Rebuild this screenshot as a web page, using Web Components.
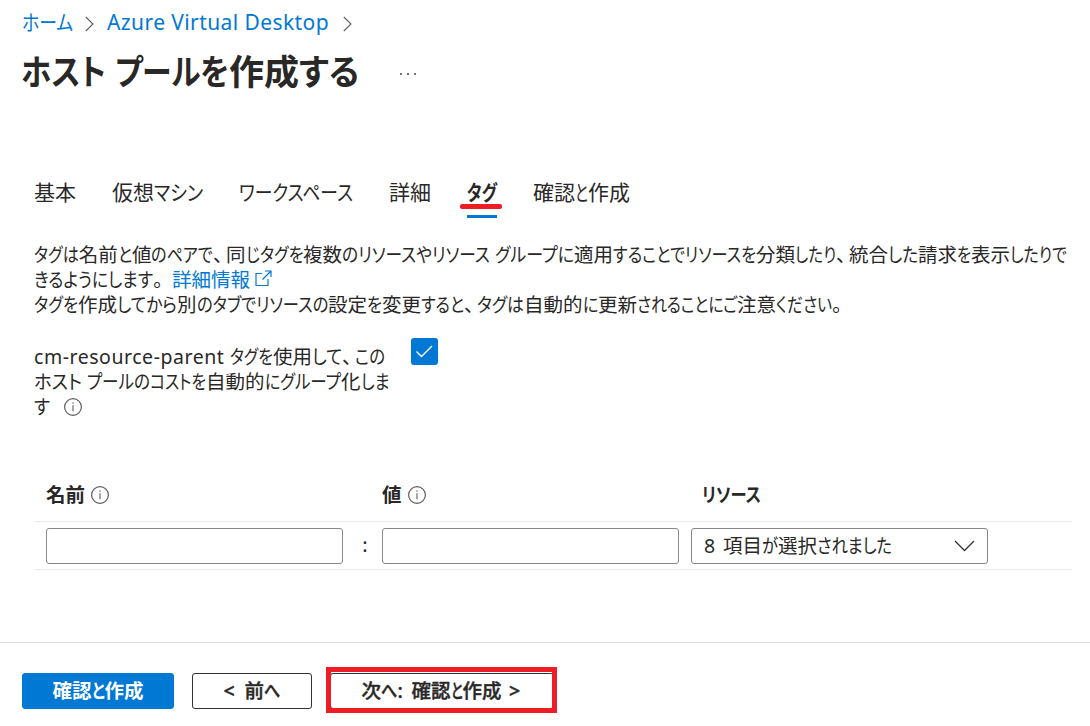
<!DOCTYPE html>
<html lang="ja">
<head>
<meta charset="utf-8">
<title>ホスト プールを作成する</title>
<style>
html,body{margin:0;background:#fff}
body{width:1090px;height:726px;overflow:hidden;color:#292827;font-family:"Noto Sans CJK JP","Noto Sans",sans-serif}
</style>
</head>
<body>
<pool-page></pool-page>
<script>
const define = (name, html, init) => {
  const tpl = document.createElement('template');
  tpl.innerHTML = html;
  customElements.define(name, class extends HTMLElement {
    connectedCallback() {
      if (this.shadowRoot) return;
      this.attachShadow({mode: 'open'}).append(tpl.content.cloneNode(true));
      if (init) init.call(this, this.shadowRoot);
    }
  });
};

/* Proportional Japanese text: kana are condensed beside full-width kanji so each phrase takes its given advance. */
define('ui-text', `<style>
:host{display:inline-block;white-space:pre;font-feature-settings:"palt";transform:translateY(var(--rise,-1.5px))}
.seg,.kana,.punct{display:inline-block;white-space:pre}
.kana{transform-origin:0 50%}
.punct{width:.66em}
.latin{font-family:"Noto Sans",sans-serif;line-height:0}
</style>`, function (root) {
  const widths = this.getAttribute('w').split(',').map(Number);
  this.getAttribute('text').split('|').forEach((phrase, i) => {
    const seg = document.createElement('span');
    seg.className = 'seg';
    const runs = phrase.match(/[、。]|[\u3003-\u30ff]+|[\x20-\x7e]+|[^\x20-\x7e\u3000-\u30ff]+/g);
    for (const r of runs) {
      const s = document.createElement('span');
      s.textContent = r;
      s.className = /[、。]/.test(r) ? 'punct' : /[\u3003-\u30ff]/.test(r) ? 'kana' : /[\x20-\x7e]/.test(r) ? 'latin' : 'kanji';
      seg.append(s);
    }
    root.append(seg);
    const diff = widths[i] - seg.getBoundingClientRect().width;
    const kana = [...seg.querySelectorAll('.kana')];
    if (kana.length) {
      const sizes = kana.map(s => s.getBoundingClientRect().width);
      const total = sizes.reduce((a, b) => a + b, 0);
      const k = (total + diff) / total;
      kana.forEach((s, j) => {
        s.style.width = sizes[j] * k + 'px';
        s.style.transform = `scaleX(${k})`;
      });
    } else {
      const n = phrase.length;
      seg.style.letterSpacing = (diff / n) + 'px';
    }
    seg.style.width = widths[i] + 'px';
  });
});

define('info-icon', `<style>:host{display:inline-block;width:18px;height:18px}svg{display:block}</style>
<svg width="18" height="18" viewBox="0 0 18 18" fill="none"><circle cx="9" cy="9" r="8.4" stroke="#605e5c" stroke-width="1.2"/><path d="M9 7.3v6" stroke="#797775" stroke-width="1.3"/><circle cx="9" cy="5.1" r=".8" fill="#797775"/></svg>`);

define('bread-crumb', `<style>
:host{display:flex;align-items:center;height:44px;padding-left:22px;color:#0078d4;font-size:21px;line-height:30px}
svg{display:block}.a{margin:3px 13px 0 12px}.b{margin:3px 0 0 14px}
</style><ui-text text="ホーム" w="51"></ui-text>
<svg class="a" width="9" height="16" viewBox="0 0 9 16" fill="none"><path d="M.8 1 8 8 .8 15" stroke="#605e5c" stroke-width="1.1"/></svg>
<ui-text text="Azure Virtual Desktop" w="222"></ui-text>
<svg class="b" width="9" height="16" viewBox="0 0 9 16" fill="none"><path d="M.8 1 8 8 .8 15" stroke="#605e5c" stroke-width="1.1"/></svg>`);

define('page-title', `<style>
:host{display:flex;align-items:center;height:58px;padding-left:21px;--rise:-3px}
h1{margin:0;font-size:35px;line-height:50px;font-weight:700}
svg{display:block;margin:2px 0 0 40px}
</style><h1><ui-text text="ホスト |プールを|作成|する" w="94,114,70,60"></ui-text></h1>
<svg width="18" height="4" viewBox="0 0 18 4" fill="#484644"><circle cx="2" cy="2" r="1"/><circle cx="9" cy="2" r="1"/><circle cx="16" cy="2" r="1"/></svg>`);

define('tab-item', `<style>
:host{display:block;position:relative;height:52px;font-size:21px;line-height:52px}
:host([active]){font-weight:700}
.line,.mark{display:none;position:absolute}
:host([active]) .line{display:block;left:0;right:0;top:49px;height:3px;background:#0078d4}
:host([active]) .mark{display:block;left:-7px;right:-5px;top:38px;height:5px;border-radius:2px;background:#ee1c25}
</style><slot></slot><i class="line"></i><i class="mark"></i>`);

define('tab-bar', `<style>:host{display:flex;gap:36px;padding:64px 0 0 34px}</style>
<tab-item><ui-text text="基本" w="42"></ui-text></tab-item>
<tab-item><ui-text text="仮想マシン" w="91"></ui-text></tab-item>
<tab-item><ui-text text="ワークスペース" w="114"></ui-text></tab-item>
<tab-item><ui-text text="詳細" w="42"></ui-text></tab-item>
<tab-item active><ui-text text="タグ" w="30"></ui-text></tab-item>
<tab-item><ui-text text="確認と作成" w="97"></ui-text></tab-item>`);

define('tag-intro', `<style>
:host{display:block;padding:24px 0 0 34px;font-size:19.5px;line-height:25px}
div{display:flex;height:25px}a{color:#0078d4;display:flex;align-items:center}svg{display:block;margin:-2px 0 0 5px}
</style>
<div><ui-text text="タグは名前と値のペアで、|同じタグを|複数のリソースやリソース |グループに|適用することで|リソースを|分類したり、|統合した|請求を|表示したりで" w="192,77,192,79,111,71,93,69,53,96"></ui-text></div>
<div><ui-text text="きるようにします|。" w="119,19"></ui-text><a><ui-text text="詳細情報" w="78"></ui-text>
<svg width="17" height="17" viewBox="0 0 17 17" fill="none" stroke="#0078d4" stroke-width="1.2"><path d="M7 3.5H1v12h12V9M10 1h6v6M16 1 7.5 9.5"/></svg></a></div>
<div><ui-text text="タグを|作成してから|別のタブでリソースの|設定を|変更すると、|タグは|自動的に|更新されることにご|注意ください。" w="44,99,151,54,95,47,74,139,108"></ui-text></div>`);

define('check-box', `<style>:host{display:block;width:27px;height:27px;border-radius:3px;background:#0078d4}svg{display:block}</style>
<svg width="27" height="27" viewBox="0 0 27 27" fill="none"><path d="m5.5 13.5 5 5L21 8" stroke="#fff" stroke-width="1.4"/></svg>`);

define('cost-option', `<style>
:host{display:flex;align-items:flex-start;padding:27px 0 0 34px;font-size:19.5px;line-height:25px}
.label{width:377px}.label div{display:flex;height:25px;align-items:center}info-icon{margin-left:14px}
check-box{margin-top:-6px}
</style><div class="label">
<div><ui-text text="cm-resource-parent |タグを|使用して、|この" w="196,43,82,30"></ui-text></div>
<div><ui-text text="ホスト |プールの|コストを|自動的に|グループ|化しま" w="53,63,56,74,61,48"></ui-text></div>
<div><ui-text text="す" w="16"></ui-text><info-icon></info-icon></div></div><check-box></check-box>`);

define('text-field', `<style>:host{display:flex;align-items:center;justify-content:space-between;box-sizing:border-box;width:297px;height:36px;border:1px solid #8a8886;border-radius:3px;background:#fff}</style><slot></slot>`);

define('tag-table', `<style>
:host{display:block;margin:50px 18px 0 34px;font-size:19.5px}
.head,.row{display:grid;align-items:center;border-bottom:1px solid #edebe9}
.head{grid-template-columns:336px 320px 1fr;height:52px;padding-left:12px;font-weight:700;line-height:28px}
.head div{display:flex;align-items:center}info-icon{margin-left:6px}
.row{grid-template-columns:297px 39px 297px 12px 297px;height:47px;padding-left:12px}
.colon{padding:0 0 4px 5px;text-align:center;line-height:30px;color:#292827}
.drop{padding-left:12px}svg{display:block;margin-right:12px}
</style>
<div class="head"><div><ui-text text="名前" w="39"></ui-text><info-icon></info-icon></div><div><ui-text text="値" w="20"></ui-text><info-icon></info-icon></div><div><ui-text text="リソース" w="59"></ui-text></div></div>
<div class="row"><text-field></text-field><span class="colon">:</span><text-field></text-field><span></span>
<text-field><ui-text class="drop" text="8 |項目が|選択|されました" w="19,55,39,75"></ui-text><svg width="21" height="12" viewBox="0 0 21 12" fill="none"><path d="m1 1 9.5 9.5L20 1" stroke="#323130" stroke-width="1.3"/></svg></text-field></div>`);

define('push-button', `<style>
:host{display:flex;align-items:center;justify-content:center;box-sizing:border-box;height:36px;border:1px solid #323130;border-radius:3px;font-size:19.5px;line-height:30px;font-weight:500;-webkit-text-stroke:.4px currentColor;position:relative}
:host([primary]){border-color:#0078d4;background:#0078d4;color:#fff;font-weight:700;-webkit-text-stroke:0}
.mark{display:none}
:host([marked]) .mark{display:block;position:absolute;left:-5px;top:-7px;width:221px;height:36px;border:5px solid #ee1c25}
</style><slot></slot><i class="mark"></i>`);

define('action-bar', `<style>
:host{display:flex;gap:18px;margin-top:72px;border-top:1px solid #dcdad8;padding:30px 0 0 22px}
.p{width:152px}.b{width:120px}.n{width:224px}
</style><push-button class="p" primary><ui-text text="確認と作成" w="91"></ui-text></push-button>
<push-button class="b"><ui-text text="&lt; |前へ" w="21,36"></ui-text></push-button>
<push-button class="n" marked><ui-text text="次へ|: |確認と作成| &gt;" w="36,14,90,21"></ui-text></push-button>`);

define('pool-page', `<style>:host{display:block}</style><bread-crumb></bread-crumb><page-title></page-title><tab-bar></tab-bar><tag-intro></tag-intro><cost-option></cost-option><tag-table></tag-table><action-bar></action-bar>`);
</script>
</body>
</html>
